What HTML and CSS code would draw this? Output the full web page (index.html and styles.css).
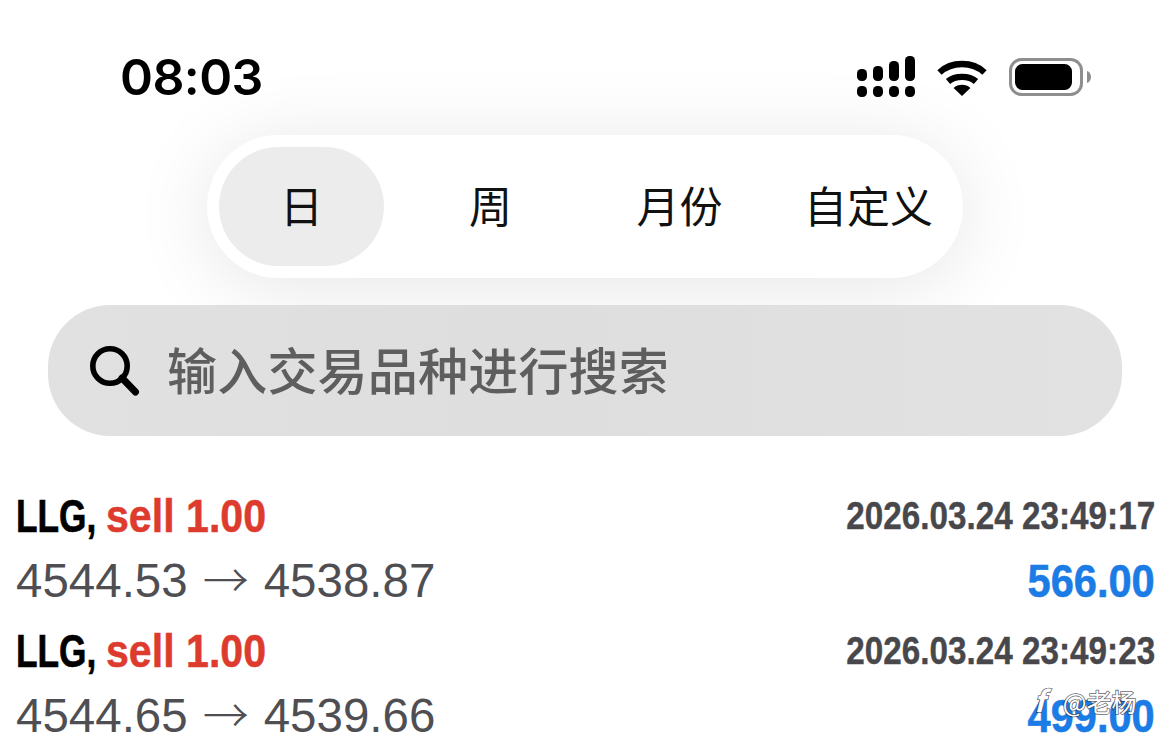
FILE: index.html
```html
<!DOCTYPE html>
<html lang="zh">
<head>
<meta charset="utf-8">
<title>交易历史</title>
<link rel="stylesheet" href="styles.css">
</head>
<body>
<div class="screen">
  <header class="status">
    <span class="time">08:03</span>
    <div class="status-icons">
      <svg class="signal" width="58" height="41" viewBox="0 0 58 41" fill="#000">
        <rect x="0" y="13" width="10" height="12" rx="4.5"/><rect x="16" y="10" width="10" height="15" rx="4.5"/><rect x="32" y="5" width="10" height="20" rx="4.5"/><rect x="48" y="0" width="10" height="25" rx="4.5"/>
        <rect x="0" y="30" width="10" height="11" rx="4.5"/><rect x="16" y="30" width="10" height="11" rx="4.5"/><rect x="32" y="30" width="10" height="11" rx="4.5"/><rect x="48" y="30" width="10" height="11" rx="4.5"/>
      </svg>
      <svg class="wifi" width="50" height="38" viewBox="0 0 50 38" fill="none" stroke="#000" stroke-width="6.4">
        <path d="M2.5 14.5C14.5 3.2 35.5 3.2 47.5 14.5"/>
        <path d="M11 23.5C18 17.3 32 17.3 39 23.5"/>
        <path d="M25 38 16.6 30C21 25.8 29 25.8 33.4 30Z" fill="#000" stroke="none"/>
      </svg>
      <svg class="battery" width="82" height="38" viewBox="0 0 82 38">
        <rect x="1.500" y="1.500" width="71" height="35" rx="11" fill="#fff" stroke="#8e8e8e" stroke-width="3"/>
        <rect x="6" y="6" width="57" height="26" rx="7.500" fill="#000"/>
        <path d="M78 13c2.500.8 4 3 4 6s-1.500 5.200-4 6Z" fill="#8e8e8e"/>
      </svg>
    </div>
  </header>

  <nav class="tabs">
    <span class="tab active">日</span>
    <span class="tab">周</span>
    <span class="tab">月份</span>
    <span class="tab">自定义</span>
  </nav>

  <div class="search">
    <svg class="search-icon" width="50" height="50" viewBox="0 0 50 50" fill="none" stroke="#000">
      <circle cx="20" cy="20" r="17.200" stroke-width="5.600"/>
      <path d="M32 32 45.500 46" stroke-width="7" stroke-linecap="round"/>
    </svg>
    <span class="search-text">输入交易品种进行搜索</span>
  </div>

  <section class="deals">
    <article class="deal">
      <div class="line">
        <span class="title"><b class="sym">LLG,</b><b class="side">sell 1.00</b></span>
        <span class="date">2026.03.24 23:49:17</span>
      </div>
      <div class="line">
        <span class="prices">4544.53<span class="arrow">→</span>4538.87</span>
        <span class="profit">566.00</span>
      </div>
    </article>
    <article class="deal">
      <div class="line">
        <span class="title"><b class="sym">LLG,</b><b class="side">sell 1.00</b></span>
        <span class="date">2026.03.24 23:49:23</span>
      </div>
      <div class="line">
        <span class="prices">4544.65<span class="arrow">→</span>4539.66</span>
        <span class="profit">499.00</span>
      </div>
    </article>
  </section>

  <div class="watermark"><i class="wm-f">f</i>@老杨</div>
</div>
</body>
</html>
```

FILE: styles.css
```css
* { box-sizing: border-box; }
html, body { margin: 0; padding: 0; background: #fff; }
.screen {
  position: relative;
  width: 1170px;
  height: 750px;
  overflow: hidden;
  background: #fff;
  font-family: "Liberation Sans", "Noto Sans CJK SC", sans-serif;
}
.status {
  display: flex;
  justify-content: space-between;
  align-items: center;
  height: 135px;
  padding: 36px 79px 18px 120px;
}
.time {
  font-family: Inter, sans-serif;
  font-weight: 600;
  font-size: 50px;
  letter-spacing: -0.6px;
  color: #000;
}
.status-icons { display: flex; align-items: center; gap: 22px; }
.status-icons svg { display: block; }
.tabs {
  display: flex;
  gap: 24px;
  width: 756px;
  height: 143px;
  margin-left: 207px;
  padding: 12px;
  border-radius: 72px;
  background: #fff;
  box-shadow: 0 8px 80px rgba(0, 0, 0, 0.1);
}
.tab {
  flex: 0 0 165px;
  display: flex;
  align-items: center;
  justify-content: center;
  padding-bottom: 6px;
  white-space: nowrap;
  border-radius: 60px;
  font-family: "Noto Sans CJK SC", sans-serif;
  font-size: 43px;
  color: #111;
}
.tab.active { background: #ececec; }
.search {
  position: relative;
  display: flex;
  align-items: center;
  gap: 27px;
  height: 131px;
  margin: 27px 48px 0;
  padding-left: 42px;
  border-radius: 62px;
  background: linear-gradient(90deg, #e1e1e1, #dedede 45%, #e2e2e2);
}
.search-icon { display: block; flex: none; }
.search-text {
  padding-bottom: 5px;
  font-family: "Noto Sans CJK SC", sans-serif;
  font-size: 50px;
  font-weight: 500;
  letter-spacing: 0.2px;
  color: #5e5e5e;
}
.deals { padding: 48px 15px 0 16px; }
.deal { height: 135px; }
.line {
  display: flex;
  justify-content: space-between;
  align-items: baseline;
  height: 63px;
  line-height: 63px;
}
.line + .line { margin-top: -1px; }
.deal { padding-bottom: 1px; }
.title, .date, .profit { font-weight: 700; }
.title { font-size: 47px; white-space: nowrap; }
.sym, .side { display: inline-block; transform-origin: left center; }
.sym { color: #000; transform: scaleX(0.75); margin-right: -17px; -webkit-text-stroke: 0.7px #000; }
.side { color: #de3b2f; transform: scaleX(0.875); -webkit-text-stroke: 0.5px #de3b2f; }
.date, .profit { display: inline-block; transform-origin: right center; white-space: nowrap; }
.date { font-size: 39px; color: #48484c; transform: scaleX(0.853) translateY(-3px); -webkit-text-stroke: 0.4px #48484c; }
.prices { font-size: 47.5px; color: #4f4f53; white-space: nowrap; }
.arrow {
  margin: 0 15px;
  font-family: "Noto Sans CJK SC", sans-serif;
  font-weight: 300;
  font-size: 46px;
}
.profit { font-size: 47px; color: #1c7ce5; transform: scaleX(0.885); -webkit-text-stroke: 0.6px #1c7ce5; }
.watermark {
  position: absolute;
  left: 1034px;
  top: 681px;
  font-family: "Noto Sans CJK SC", sans-serif;
  font-size: 25px;
  line-height: 36px;
  color: #fff;
  -webkit-text-stroke: 1.6px rgba(50, 50, 60, 0.75);
  paint-order: stroke fill;
}
.wm-f { margin-right: 18px; font-size: 29px; font-style: italic; font-weight: 700; }
```
